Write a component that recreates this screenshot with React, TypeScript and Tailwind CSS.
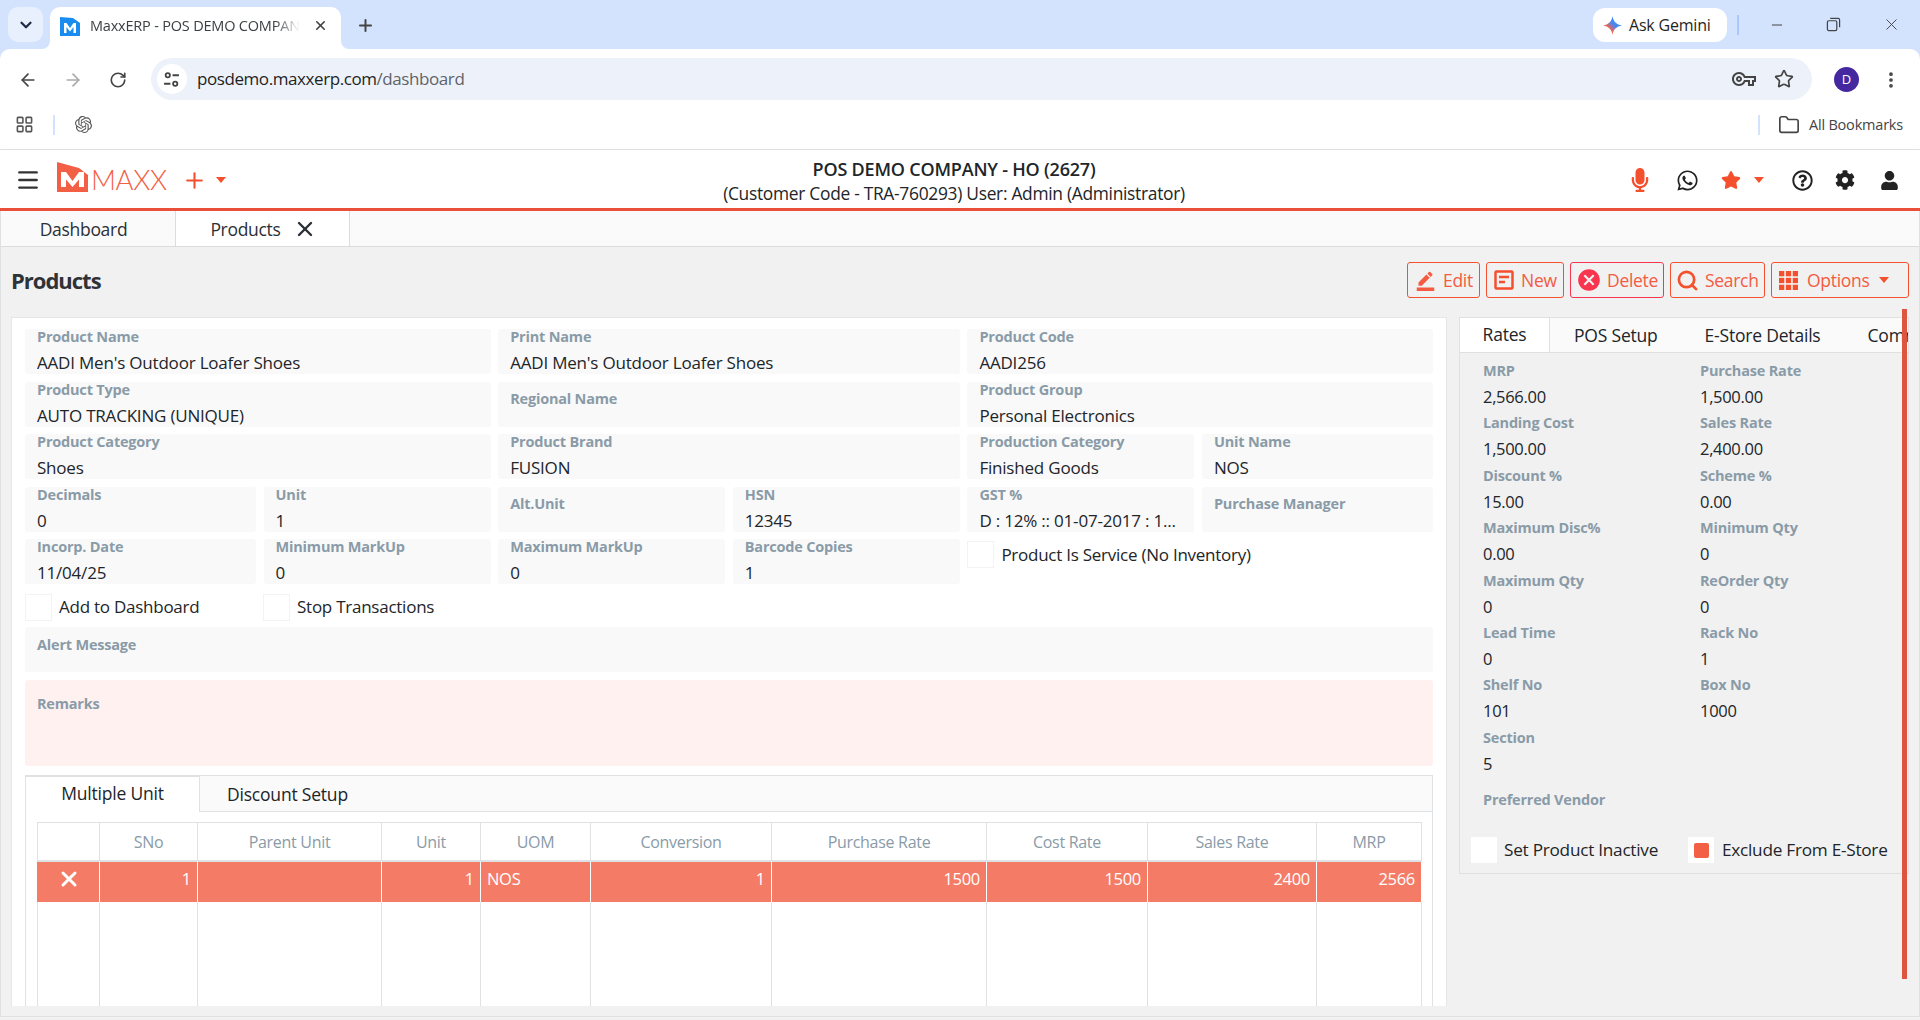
import { ArrowLeft, ArrowRight, ChevronDown, EllipsisVertical, Folder, LayoutGrid, Menu, Minus, Plus, RotateCw, Search, Star, X } from "lucide-react";
import { FaCog, FaMicrophone, FaRegQuestionCircle, FaStar, FaUser, FaWhatsapp } from "react-icons/fa";
import { MdBorderColor, MdCancel, MdOutlineVpnKey } from "react-icons/md";
import { SiOpenai } from "react-icons/si";

const labelClass = "text-[14.500px] leading-[18px] font-bold text-[#8a9ba8] tracking-[-0.2px]";

const Caret = ({ className }: { className: string }) => (
    <span className={`w-0 h-0 border-x-[5px] border-x-transparent border-t-[6px] ${className}`} />
);

const Field = ({ label, value, className = "" }: { label: string; value?: string; className?: string }) => (
    <div className={`h-[45px] rounded-[3px] bg-[#f9f9f9] pl-3 pr-2 ${value ? "" : "pt-[8px]"} ${className}`}>
        <div className={`${labelClass} ${value ? "-mt-px" : ""}`}>{label}</div>
        {value && <div className="mt-[5px] text-[17px] leading-6 text-[#212529] truncate tracking-[-0.2px]">{value}</div>}
    </div>
);

const Check = ({ label, className = "" }: { label: string; className?: string }) => (
    <div className={`flex items-center gap-[7px] ${className}`}>
        <span className="w-[27px] h-[27px] border border-[#f3f3f3] bg-white" />
        <span className="text-[17px] text-[#212529] tracking-[-0.25px]">{label}</span>
    </div>
);

const Rate = ({ label, value }: { label: string; value: string }) => (
    <div className="h-[52.4px]">
        <div className={`${labelClass} -mt-px`}>{label}</div>
        <div className="mt-[5px] text-[16.5px] leading-6 text-[#212529] tracking-[-0.3px]">{value}</div>
    </div>
);

const ActionButton = ({ label, icon, className = "border-[#f4502e]", wide = "", caret = false }: { label: string; icon: React.ReactNode; className?: string; wide?: string; caret?: boolean }) => (
    <button className={`h-9 flex items-center gap-[7px] border rounded-[3px] px-[7px] whitespace-nowrap text-[17.5px] text-[#f45b41] tracking-[-0.3px] ${className} ${wide}`}>
        {icon}
        {label}
        {caret && <Caret className="ml-[1px] border-t-[#f4502e]" />}
    </button>
);

const columns = [
    { name: "", width: "w-[62px]" },
    { name: "SNo", width: "w-[98px]" },
    { name: "Parent Unit", width: "w-[184px]" },
    { name: "Unit", width: "w-[99px]" },
    { name: "UOM", width: "w-[110px]" },
    { name: "Conversion", width: "w-[181px]" },
    { name: "Purchase Rate", width: "w-[215px]" },
    { name: "Cost Rate", width: "w-[161px]" },
    { name: "Sales Rate", width: "w-[169px]" },
    { name: "MRP", width: "w-[105px]" },
];

const rowValues = ["1", "", "1", "NOS", "1", "1500", "1500", "2400", "2566"];

const rates = [
    ["MRP", "2,566.00"], ["Purchase Rate", "1,500.00"],
    ["Landing Cost", "1,500.00"], ["Sales Rate", "2,400.00"],
    ["Discount %", "15.00"], ["Scheme %", "0.00"],
    ["Maximum Disc%", "0.00"], ["Minimum Qty", "0"],
    ["Maximum Qty", "0"], ["ReOrder Qty", "0"],
    ["Lead Time", "0"], ["Rack No", "1"],
    ["Shelf No", "101"], ["Box No", "1000"],
    ["Section", "5"],
];

const BrowserChrome = () => (
    <>
        <div className="h-[49px] bg-[#d3e3fd] flex items-end pl-2 pr-[19px] relative">
            <div className="w-[35px] h-[35px] mb-[7px] rounded-[10px] bg-[#e8f0fe] flex items-center justify-center">
                <ChevronDown className="size-[18px] text-[#1f2a44]" strokeWidth={3} />
            </div>
            <div className="ml-[7px] w-[291px] h-[42px] bg-white rounded-t-[10px] flex items-center pl-[10px] pr-[13px] pb-[5px] relative">
                <svg viewBox="0 0 8 8" className="size-2 absolute -left-2 bottom-0">
                    <path d="M8 0 V8 H0 A8 8 0 0 0 8 0 Z" fill="#fff" />
                </svg>
                <svg viewBox="0 0 8 8" className="size-2 absolute -right-2 bottom-0">
                    <path d="M0 0 V8 H8 A8 8 0 0 1 0 0 Z" fill="#fff" />
                </svg>
                <svg viewBox="0 0 20 20" className="size-5 shrink-0">
                    <path d="M0 1 L13 2 L20 7 V20 H0 Z" fill="#1a8cf0" />
                    <path d="M4 17 V7 H6.5 L10 12 L13.500 7 H16 V17 H13.500 V11 L10 15.500 L6.500 11 V17 Z" fill="#fff" />
                </svg>
                <div className="ml-[10px] w-[210px] overflow-hidden whitespace-nowrap text-[14.5px] text-[#3c4043] tracking-[-0.2px] [mask-image:linear-gradient(to_right,black_88%,transparent)]">MaxxERP - POS DEMO COMPANY - HO (2627)</div>
                <X className="size-[15px] ml-auto text-[#3c4043]" strokeWidth={2.5} />
            </div>
            <Plus className="size-[19px] ml-[15px] mb-[14px] text-[#444]" strokeWidth={2.5} />
            <div className="ml-auto self-start mt-2 h-[34px] w-[134px] bg-white rounded-xl flex items-center pl-[10px] gap-[7px]">
                <svg viewBox="0 0 24 24" className="size-[19px]">
                    <defs>
                        <linearGradient id="gem" x1="0" y1="1" x2="1" y2="0">
                            <stop offset="0" stopColor="#f6b73c" />
                            <stop offset="0.35" stopColor="#e8655a" />
                            <stop offset="0.55" stopColor="#4a86f0" />
                            <stop offset="1" stopColor="#1e9bf5" />
                        </linearGradient>
                    </defs>
                    <path d="M12 0 C13 7 17 11 24 12 C17 13 13 17 12 24 C11 17 7 13 0 12 C7 11 11 7 12 0 Z" fill="url(#gem)" />
                </svg>
                <span className="text-[16px] font-medium text-[#1f1f1f] tracking-[-0.2px]">Ask Gemini</span>
            </div>
            <div className="self-start mt-[15px] ml-[10px] w-[2px] h-5 bg-[#a8c7fa]" />
            <div className="self-start mt-[15px] ml-[30px] flex items-center gap-[41px] text-[#444]">
                <Minus className="size-[16px]" strokeWidth={1.5} />
                <svg viewBox="0 0 16 16" className="size-[15px]" fill="none" stroke="currentColor" strokeWidth="1.3">
                    <rect x="1.500" y="4" width="10" height="10.500" rx="1.500" />
                    <path d="M4.500 1.500 H13 A1.500 1.500 0 0 1 14.500 3 V11" />
                </svg>
                <X className="size-[19px]" strokeWidth={1.2} />
            </div>
        </div>
        <div className="bg-[#d3e3fd]">
            <div className="h-[61px] bg-white rounded-t-[10px] flex items-center pl-[18px] pr-[19px]">
                <ArrowLeft className="size-5 text-[#444]" strokeWidth={2} />
                <ArrowRight className="size-5 ml-[25px] text-[#aaa]" strokeWidth={2} />
                <RotateCw className="size-[18px] ml-[26px] text-[#444]" strokeWidth={2.2} />
                <div className="ml-[24px] w-[1662px] h-[42px] mb-[1px] rounded-full bg-[#edf2fa] flex items-center pl-[6px] pr-[18px]">
                    <div className="size-[30px] rounded-full bg-white flex items-center justify-center">
                        <svg viewBox="0 0 16 16" className="size-[17px]" fill="none" stroke="#444" strokeWidth="1.700">
                            <circle cx="4.500" cy="4" r="2" />
                            <path d="M9 4 H15 M1 12 H7" />
                            <circle cx="11.500" cy="12" r="2" />
                        </svg>
                    </div>
                    <div className="ml-[10px] text-[17px] tracking-[-0.42px] text-[#1f1f1f]">posdemo.maxxerp.com<span className="text-[#5f6368]">/dashboard</span></div>
                    <MdOutlineVpnKey className="size-6 ml-auto text-[#444]" />
                    <Star className="size-5 ml-[18px] text-[#444]" strokeWidth={2} />
                </div>
                <div className="ml-[22px] size-[25px] rounded-full bg-[#4527a0] text-white text-[13px] flex items-center justify-center">D</div>
                <EllipsisVertical className="size-5 ml-[22px] text-[#444]" strokeWidth={2.5} />
            </div>
        </div>
        <div className="h-[40px] bg-white border-b border-[#e3e3e3] flex items-center pl-[15px] pr-[17px] pb-[10px]">
            <LayoutGrid className="size-[19px] text-[#555]" strokeWidth={2} />
            <div className="ml-[19px] w-[2px] h-5 bg-[#d3e3fd]" />
            <SiOpenai className="size-[17px] ml-[20px] text-[#555]" />
            <div className="ml-auto w-[2px] h-5 bg-[#d3e3fd]" />
            <Folder className="size-[22px] ml-[18px] text-[#444]" strokeWidth={1.8} />
            <span className="ml-[9px] text-[14.500px] text-[#444] tracking-[-0.2px]">All Bookmarks</span>
        </div>
    </>
);

const AppHeader = () => (
    <header className="h-[61px] bg-white border-b-[3px] border-[#e8503a] flex items-center shadow-[0_2px_6px_rgba(0,0,0,0.08)] relative">
        <div className="flex-1 flex items-center pl-[15px] pt-[2px]">
            <Menu className="size-[26px] text-[#333]" strokeWidth={2.2} />
            <svg viewBox="0 0 31 31" className="w-[31px] h-[31px] ml-[16px] mb-[6px]">
                <path d="M0 0 L22 6 L31 13 V30 H0 Z" fill="#f35f45" />
                <path d="M4 25 V10 H9 L15.500 19 L22 10 H27 V25 H22 V17.500 L15.500 25 L9 17.500 V25 Z" fill="#fff" />
            </svg>
            <span className="ml-[3px] text-[27.500px] leading-none font-light text-[#f35f45] tracking-[-0.4px] font-['Lato',sans-serif]">MAXX</span>
            <Plus className="size-[25px] ml-[15px] text-[#f4502e]" strokeWidth={2} />
            <Caret className="ml-[9px] border-t-[#f4502e]" />
        </div>
        <div className="text-center text-[#212529] leading-6 mr-[6px] pt-[3px]">
            <div className="text-[18px] font-semibold tracking-[-0.2px]">POS DEMO COMPANY - HO (2627)</div>
            <div className="text-[17.400px] tracking-[-0.3px]">(Customer Code - TRA-760293) User: Admin (Administrator)</div>
        </div>
        <div className="flex-1 flex items-center justify-end pr-[21px] pt-[2px] text-[#222]">
            <FaMicrophone className="size-[24px] text-[#f4502e]" />
            <FaWhatsapp className="size-[23px] ml-[24px]" />
            <FaStar className="size-[20px] ml-[22px] text-[#f4502e]" />
            <Caret className="ml-[13px] border-t-[#f4502e]" />
            <FaRegQuestionCircle className="size-[21px] ml-[28px]" />
            <FaCog className="size-[20px] ml-[22px]" />
            <FaUser className="size-[19px] ml-[25px]" />
        </div>
    </header>
);

export default function App() {
    return (
        <div className="w-[1920px] h-[1020px] overflow-hidden bg-[#f1f1f1] flex flex-col font-['Open_Sans',sans-serif]">
            <BrowserChrome />
            <AppHeader />
            <div className="flex-1 min-h-0 flex flex-col border-x border-b border-[#dfe2e5] mb-[3px] relative">
                <div className="h-[36px] shrink-0 bg-[#fafafa] border-b border-[#dcdcdc] flex text-[17.500px] text-[#2b2f36] tracking-[-0.3px]">
                    <div className="w-[175px] border-r border-[#dcdcdc] flex items-center justify-center pr-[9px] pt-[2px]">Dashboard</div>
                    <div className="w-[174px] bg-white border-r border-[#dcdcdc] flex items-center justify-center gap-[12px] pl-[2px] pt-[1px]">
                        Products
                        <X className="size-[24px] -mt-[1px]" strokeWidth={2.4} />
                    </div>
                </div>
                <div className="h-[70px] shrink-0 flex items-start justify-between pl-[10px] pr-[10px]">
                    <h1 className="mt-[17px] text-[22px] leading-8 font-bold text-[#2f3338] tracking-[-1px]">Products</h1>
                    <div className="mt-[15px] flex gap-[6px]">
                        <ActionButton label="Edit" wide="w-[73px]" icon={<MdBorderColor className="size-[21px] shrink-0" />} />
                        <ActionButton label="New" wide="w-[78px]" icon={
                            <svg viewBox="0 0 20 20" className="size-[20px] shrink-0" fill="none" stroke="#f4502e" strokeWidth="2.500">
                                <rect x="1.500" y="1.500" width="17" height="17" rx="1" />
                                <path d="M5 7 H15 M5 12 H11" />
                            </svg>
                        } />
                        <ActionButton label="Delete" wide="w-[94px] !gap-[5px] !px-[6px]" className="border-[#f9344f]" icon={<MdCancel className="size-[26px] text-[#f9344f] shrink-0 -ml-[1px]" />} />
                        <ActionButton label="Search" wide="w-[95px] !gap-[6px] !px-[5px]" icon={<Search className="size-[23px] text-[#f4502e] shrink-0" strokeWidth={2.800} />} />
                        <ActionButton label="Options" wide="w-[138px] !gap-[9px]" caret icon={
                            <svg viewBox="0 0 18 18" className="size-[19px] shrink-0" fill="#f4502e">
                                <rect x="0" y="0" width="5" height="5" /><rect x="6.500" y="0" width="5" height="5" /><rect x="13" y="0" width="5" height="5" />
                                <rect x="0" y="6.500" width="5" height="5" /><rect x="6.500" y="6.500" width="5" height="5" /><rect x="13" y="6.500" width="5" height="5" />
                                <rect x="0" y="13" width="5" height="5" /><rect x="6.500" y="13" width="5" height="5" /><rect x="13" y="13" width="5" height="5" />
                            </svg>
                        } />
                    </div>
                </div>
                <div className="flex-1 min-h-0 flex pl-[10px]">
                    <div className="w-[1436px] h-[689px] shrink-0 overflow-hidden bg-white border border-b-0 border-[#e6e6e6] pl-[13px] pt-[11px] pr-[12px]">
                        <div className="grid grid-cols-[231px_227px_227px_227px_227px_231px] gap-x-[7.600px] gap-y-[7.500px]">
                            <Field label="Product Name" value="AADI Men's Outdoor Loafer Shoes" className="col-span-2" />
                            <Field label="Print Name" value="AADI Men's Outdoor Loafer Shoes" className="col-span-2" />
                            <Field label="Product Code" value="AADI256" className="col-span-2" />
                            <Field label="Product Type" value="AUTO TRACKING (UNIQUE)" className="col-span-2" />
                            <Field label="Regional Name" className="col-span-2" />
                            <Field label="Product Group" value="Personal Electronics" className="col-span-2" />
                            <Field label="Product Category" value="Shoes" className="col-span-2" />
                            <Field label="Product Brand" value="FUSION" className="col-span-2" />
                            <Field label="Production Category" value="Finished Goods" />
                            <Field label="Unit Name" value="NOS" />
                            <Field label="Decimals" value="0" />
                            <Field label="Unit" value="1" />
                            <Field label="Alt.Unit" />
                            <Field label="HSN" value="12345" />
                            <Field label="GST %" value="D : 12% :: 01-07-2017 : 1..." />
                            <Field label="Purchase Manager" />
                            <Field label="Incorp. Date" value="11/04/25" />
                            <Field label="Minimum MarkUp" value="0" />
                            <Field label="Maximum MarkUp" value="0" />
                            <Field label="Barcode Copies" value="1" />
                            <Check label="Product Is Service (No Inventory)" className="col-span-2 self-start mt-[2px]" />
                        </div>
                        <div className="flex h-[28px] mt-[9px]">
                            <Check label="Add to Dashboard" className="w-[238px]" />
                            <Check label="Stop Transactions" />
                        </div>
                        <div className="mt-[6px] h-[45px] bg-[#f9f9f9] rounded-[3px] pl-3 pt-[9px] w-[1408px]">
                            <div className={labelClass}>Alert Message</div>
                        </div>
                        <div className="mt-2 h-[86px] bg-[#fff1f0] rounded-[3px] pl-3 pt-[15px] w-[1408px]">
                            <div className={labelClass}>Remarks</div>
                        </div>
                        <div className="mt-[9px] w-[1408px] border border-b-0 border-[#dfe2e5] pb-4">
                            <div className="h-[36px] bg-[#fafafa] border-b border-[#dfe2e5] flex text-[17.500px] text-[#212529] tracking-[-0.2px]">
                                <div className="w-[174px] bg-white border-r border-t-2 -mt-[1px] h-[37px] border-[#dfe2e5] flex items-center justify-center font-medium pb-[2px]">Multiple Unit</div>
                                <div className="ml-[27px] flex items-center font-medium pt-[1px]">Discount Setup</div>
                            </div>
                            <div className="mt-[10px] ml-[11px]">
                                <table className="table-fixed border-collapse w-[1384px] text-[16px] tracking-[-0.3px]">
                                    <thead>
                                        <tr className="h-[38px]">
                                            {columns.map((col) => (
                                                <th key={col.name} className={`${col.width} border border-b-2 border-[#dfe2e5] font-normal text-[#8a9ba8] text-center pt-[2px]`}>{col.name}</th>
                                            ))}
                                        </tr>
                                    </thead>
                                    <tbody>
                                        <tr className="h-[41px] bg-[#f47c66] text-white text-[16.500px]">
                                            <td className="border-x border-[#f47c66] border-r-white">
                                                <div className="flex justify-center -mt-[5px]">
                                                    <X className="size-[24px]" strokeWidth={3} />
                                                </div>
                                            </td>
                                            {rowValues.map((val, i) => (
                                                <td key={i} className={`border-x border-white pb-[5px] ${val === "NOS" ? "text-left pl-[6px]" : "text-right pr-[6px]"}`}>{val}</td>
                                            ))}
                                        </tr>
                                        <tr className="h-[200px]">
                                            {columns.map((col) => (
                                                <td key={col.name} className="border-x border-[#dfe2e5]" />
                                            ))}
                                        </tr>
                                    </tbody>
                                </table>
                            </div>
                        </div>
                    </div>
                    <div className="ml-[12px] w-[450px] h-[557px] shrink-0 border border-[#e0e0e0] overflow-hidden">
                        <div className="h-[35px] bg-[#fafafa] border-b border-[#e0e0e0] flex items-center text-[17.500px] font-medium text-[#212529] tracking-[-0.2px] whitespace-nowrap">
                            <div className="w-[90px] shrink-0 h-full bg-white border-r border-[#e0e0e0] flex items-center justify-center pb-[2px]">Rates</div>
                            <span className="ml-[24px] shrink-0">POS Setup</span>
                            <span className="ml-[47px] shrink-0">E-Store Details</span>
                            <span className="ml-[47px] shrink-0">Commission</span>
                        </div>
                        <div className="pl-[23px] pt-[10px] grid grid-cols-[217px_217px]">
                            {rates.map(([label, value]) => <Rate key={label} label={label} value={value} />)}
                        </div>
                        <div className={`pl-[23px] mt-[9px] ${labelClass}`}>Preferred Vendor</div>
                        <div className="mt-[28px] flex pl-[11px]">
                            <div className="w-[217px] flex items-center gap-[7px]">
                                <span className="size-[26px] bg-white" />
                                <span className="text-[17.200px] text-[#212529] tracking-[-0.25px]">Set Product Inactive</span>
                            </div>
                            <div className="flex items-center gap-2">
                                <span className="size-[26px] bg-white flex items-center justify-center">
                                    <span className="size-[15px] bg-[#f35f45] rounded-[2px]" />
                                </span>
                                <span className="text-[17.200px] text-[#212529] tracking-[-0.25px]">Exclude From E-Store</span>
                            </div>
                        </div>
                    </div>
                </div>
                <div className="absolute left-[1901px] top-[98px] w-[5px] h-[670px] bg-[#dd5540]" />
            </div>
        </div>
    );
}
